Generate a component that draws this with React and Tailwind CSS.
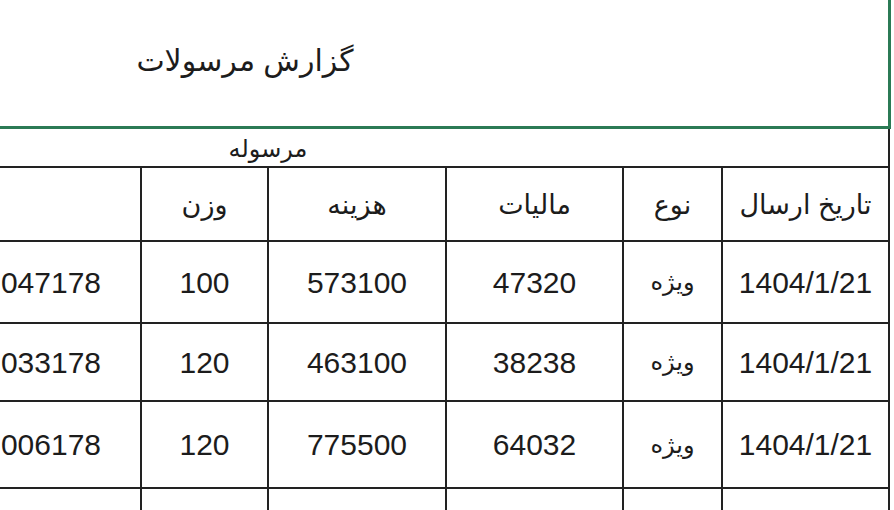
export default function App() {
  const cols = [
    "w-[142px]",
    "w-[127px]",
    "w-[178px]",
    "w-[177px]",
    "w-[99px]",
    "w-[167px]",
  ];
  const header = ["", "وزن", "هزینه", "مالیات", "نوع", "تاریخ ارسال"];
  const rows = [
    { h: "h-[82px]", v: ["047178", "100", "573100", "47320", "ویژه", "1404/1/21"] },
    { h: "h-[78px]", v: ["033178", "120", "463100", "38238", "ویژه", "1404/1/21"] },
    { h: "h-[87px]", v: ["006178", "120", "775500", "64032", "ویژه", "1404/1/21"] },
    { h: "h-[80px]", v: ["", "", "", "", "", ""] },
  ];
  const font = { fontFamily: '"Liberation Sans", "DejaVu Sans", sans-serif' };
  return (
    <div className="w-[894px] h-[510px] overflow-hidden bg-white text-[#1c1c1c]" style={font}>
      <div className="w-[891px] h-[129px] border-b-[3px] border-r-[3px] border-[#2b7a55] flex items-center">
        <div className="w-[490px] flex justify-center pb-[6px]">
          <span dir="rtl" className="text-[30px]">گزارش مرسولات</span>
        </div>
      </div>
      <div className="w-[890px] h-[39px] border-b-2 border-r-2 border-[#222] flex items-center">
        <div className="w-[536px] flex justify-center pt-[2px]">
          <span dir="rtl" className="text-[24px]">مرسوله</span>
        </div>
      </div>
      <div className="w-[890px] h-[74px] border-b-2 border-[#222] flex">
        {header.map((t, i) => (
          <div key={i} className={`${cols[i]} h-full border-r-2 border-[#222] flex items-center justify-center pt-[2px]`}>
            <span dir="rtl" className="text-[27px]">{t}</span>
          </div>
        ))}
      </div>
      {rows.map((r, ri) => (
        <div key={ri} className={`w-[890px] ${r.h} border-b-2 border-[#222] flex shrink-0`}>
          {r.v.map((t, i) => (
            <div
              key={i}
              className={`${cols[i]} h-full border-r-2 border-[#222] flex items-center ${i === 0 ? "justify-end pr-[39px]" : "justify-center"}`}
            >
              <span dir={i === 4 ? "rtl" : "ltr"} className={i === 4 ? "text-[24px]" : "text-[30px]"}>
                {t}
              </span>
            </div>
          ))}
        </div>
      ))}
    </div>
  );
}
